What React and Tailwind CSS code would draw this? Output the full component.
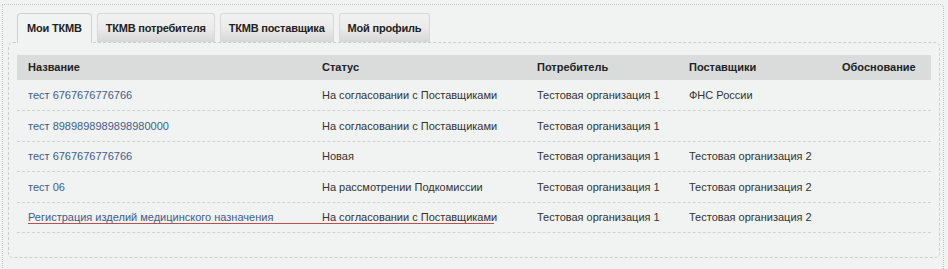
import React from 'react';

const tabs = ['Мои ТКМВ', 'ТКМВ потребителя', 'ТКМВ поставщика', 'Мой профиль'];

const rows = [
  { name: 'тест 6767676776766', status: 'На согласовании с Поставщиками', consumer: 'Тестовая организация 1', supplier: 'ФНС России' },
  { name: 'тест 8989898989898980000', status: 'На согласовании с Поставщиками', consumer: 'Тестовая организация 1', supplier: '' },
  { name: 'тест 6767676776766', status: 'Новая', consumer: 'Тестовая организация 1', supplier: 'Тестовая организация 2' },
  { name: 'тест 06', status: 'На рассмотрении Подкомиссии', consumer: 'Тестовая организация 1', supplier: 'Тестовая организация 2' },
  { name: 'Регистрация изделий медицинского назначения', status: 'На согласовании с Поставщиками', consumer: 'Тестовая организация 1', supplier: 'Тестовая организация 2', hover: true },
];

// ширины колонок по скриншоту
const cols = 'grid grid-cols-[305px_215px_152px_153px_1fr]';

export default function App() {
  return (
    <div className="w-[948px] h-[269px] bg-[#f1f2f2] overflow-hidden font-['Liberation_Sans',Arial,sans-serif] text-[11px] text-[#333]">
      <div className="ml-[2px] mt-[4px] w-[942px] h-[280px] border border-dotted border-[#c6c6c6] rounded-tr-[4px] pt-[8px] pl-[5px]">
        {/* Вкладки */}
        <div className="flex gap-[5px] pl-[9px] h-[29px] items-end relative z-10 tracking-[-0.2px]">
          {tabs.map((t, i) =>
            i === 0 ? (
              <div key={t} className="h-[30px] px-[9px] flex items-center font-bold text-[#222] bg-[#f1f2f2] border border-b-0 border-[#d0d0d0] rounded-t-[4px] -mb-px">
                {t}
              </div>
            ) : (
              <div key={t} className="h-[29px] px-[8px] flex items-center font-bold text-[#222] bg-gradient-to-b from-[#f2f2f2] via-[#ebebeb] to-[#d6d6d6] border border-b-0 border-[#d8d8d8] rounded-t-[3px]">
                {t}
              </div>
            )
          )}
        </div>

        {/* Панель с таблицей */}
        <div className="w-[932px] h-[216px] border border-dashed border-[#cdcdcd] rounded-[5px] pt-[12px] px-[8px]">
          <div className={`${cols} h-[25px] items-center bg-[#dadbdb] font-bold text-[#222]`}>
            <div className="pl-[11px]">Название</div>
            <div>Статус</div>
            <div>Потребитель</div>
            <div>Поставщики</div>
            <div>Обоснование</div>
          </div>
          {rows.map((r, i) => (
            <div key={i} className={`${cols} relative ${i === 0 ? 'h-[31px]' : 'h-[30.5px]'} items-center border-b border-dashed border-[#d2d2d2]`}>
              <div className="pl-[11px]">
                <a href="#" className="text-[#3d5d8f] no-underline">{r.name}</a>
              </div>
              <div>{r.status}</div>
              <div>{r.consumer}</div>
              <div>{r.supplier}</div>
              <div></div>
              {r.hover && (
                <div className="absolute left-[11px] top-[20px] w-[466px] h-px bg-[#c0504d]" />
              )}
            </div>
          ))}
        </div>
      </div>
    </div>
  );
}
